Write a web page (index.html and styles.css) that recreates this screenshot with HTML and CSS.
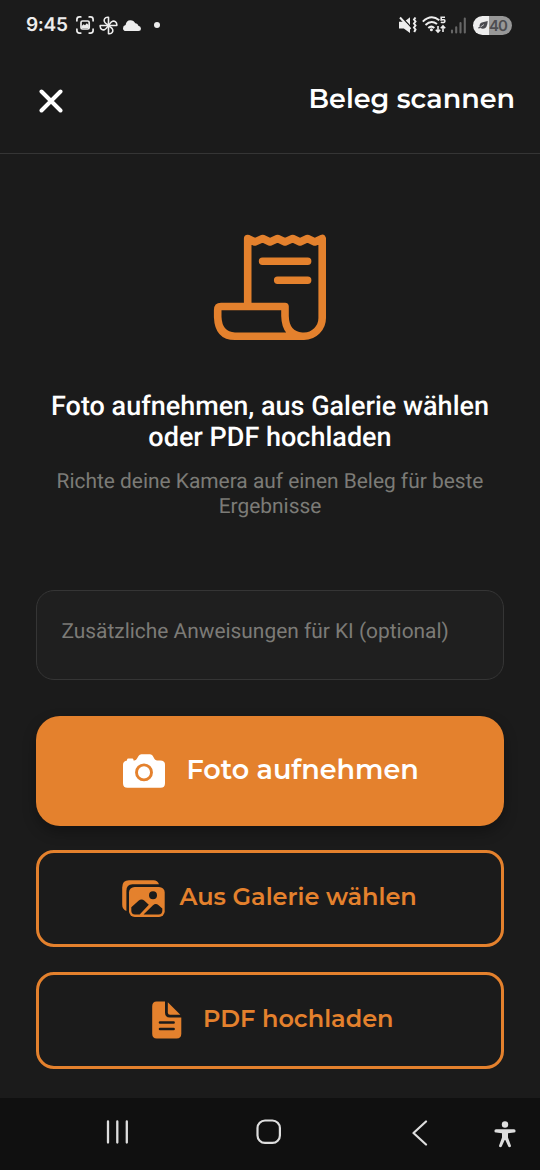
FILE: index.html
```html
<!DOCTYPE html>
<html lang="de">
<head>
<meta charset="utf-8">
<title>Beleg scannen</title>
<link rel="stylesheet" href="styles.css">
</head>
<body>
<div class="screen">
  <div class="status">
    <div class="status-left">
      <span class="time">9:45</span>
      <svg class="ic-capture" width="18" height="18" viewBox="0 0 18 18" fill="none" stroke="#ededed" stroke-width="1.7" stroke-linecap="round"><path d="M.9 4.8V3.5Q.9.9 3.5.9H4.8M13.2.9h1.3q2.6 0 2.6 2.6v1.3M17.1 13.2v1.3q0 2.6-2.6 2.6h-1.3M4.8 17.1H3.5q-2.6 0-2.6-2.6v-1.3"/><rect x="5" y="5" width="8.2" height="8" rx="1.5"/><path d="M5.5 12V10.200l2-1.900 1.500 1 1.800-2 2 2V12z" fill="#ededed" stroke="none"/></svg>
      <svg class="ic-fan" width="19" height="19" viewBox="0 0 19 19" fill="none" stroke="#ededed" stroke-width="1.6" stroke-linejoin="round"><g id="blade"><path d="M9.500 9.500V1.200H8.500C5.800 1.300 4.800 3.600 5.300 5.400 5.800 7.300 8 8.200 9.500 9.500z"/></g><use href="#blade" transform="rotate(90 9.5 9.5)"/><use href="#blade" transform="rotate(180 9.5 9.5)"/><use href="#blade" transform="rotate(270 9.5 9.5)"/></svg>
      <svg class="ic-cloud" width="18" height="11" viewBox="0 0 18 11" fill="#ededed"><path d="M3 11Q0 11 0 8.200 0 5.500 2.600 5 3.300.3 7.400.2q3.500 0 4.800 3 2.500-.3 3.200 2.600Q18 6.200 18 8.800 18 11 15.500 11z"/></svg>
      <i class="dot"></i>
    </div>
    <div class="status-right">
      <svg width="18" height="18" viewBox="0 0 18 18" fill="#ededed"><path d="M0 5.700H4L11 9V17L4.800 12.500H0zM6.500 4.700 11 1.300V9z"/><path d="M2.300.6 12.500 12" fill="none" stroke="#1b1b1b" stroke-width="1.300"/><path d="m1 1.500 10.500 11.500M16.500 1.500 15 3.500l1.500 2-1.500 2 1.500 2-1.500 2 1.500 2-1.300 2.500" fill="none" stroke="#ededed" stroke-width="2"/></svg>
      <svg class="ic-wifi" width="24" height="18" viewBox="0 0 24 18" fill="none" stroke="#ededed" stroke-width="2"><path d="M.8 5.600Q9-2.200 17.300 4.200M3.500 9Q9 3.600 15 8M6.300 12q3-2.800 6 0"/><circle cx="9.400" cy="13.700" r="1.500" fill="#ededed" stroke="none"/><path d="M23 1.200h-3.800v2.700q3.800-.8 3.700 1.300-.2 2-4.100 1M16 10v6m-2.200-2.300L16 16l2.200-2.300M21 16v-6m-2.200 2.300L21 10l2.200 2.300" stroke-width="1.600"/></svg>
      <svg class="ic-signal" width="17" height="17" viewBox="0 0 17 17" stroke="#666" stroke-width="2.100" stroke-linecap="round"><path d="M2 13.500v2M6.200 10.200v5.300M10.500 6v9.500M14.800 1.500v14"/></svg>
      <div class="battery"><svg width="10" height="8" viewBox="0 0 10 8"><path d="M0 6.500 1.600 6Q1 2 4.800 1.200L9.700 0Q9.500 7.500 5 7.700 3.500 7.700 2.500 7L.5 7.500z" fill="#4a4a4f"/><path d="m2.500 6 3.500-2.500" stroke="#ddd" stroke-width=".8"/></svg><span>40</span></div>
    </div>
  </div>
  <header class="header">
    <svg class="close" width="24" height="24" viewBox="0 0 24 24" stroke="#fff" stroke-width="4" stroke-linecap="round"><path d="m2.500 2.500 19 19m0-19-19 19"/></svg>
    <h1 class="brand title">Beleg scannen</h1>
  </header>
  <main class="content">
    <svg class="receipt" width="116" height="108" viewBox="212 233 116 108" fill="none" stroke="#e4812d" stroke-width="7.600" stroke-linecap="round" stroke-linejoin="round"><path d="M247.700 304V238.500L254.800 242 262.700 238.500 270 242 277.600 238.500 285 242 292.700 238.500 300 242 307.500 238.500 314.800 242 322.200 238.500V318A18.200 18.200 0 0 1 304 336.200H235Q218.500 336.200 217.700 317V310Q217.700 306.500 221 306.500H285V316Q285.500 335 302 336.200"/><path d="M262.500 261.200H307.700M277.600 280.200H307.700" stroke-width="7.400"/></svg>
    <h2 class="headline">Foto aufnehmen, aus Galerie wählen oder PDF hochladen</h2>
    <p class="hint">Richte deine Kamera auf einen Beleg für beste Ergebnisse</p>
    <div class="field">Zusätzliche Anweisungen für KI (optional)</div>
    <button class="btn primary">
      <svg width="42" height="34" viewBox="0 0 42 34"><path d="M4 6.400V5.700Q4.200 4.600 5.300 4.600H9.200Q10.300 4.600 10.500 5.700V6.400H11.500Q13 6.400 13.700 5L15.700 1.700Q16.600.2 18.400.2H27Q28.800.2 29.700 1.700L31.500 5Q32.400 6.400 34 6.400H37.500Q42 6.400 42 10.800V29.200Q42 33.700 37.500 33.700H4.500Q0 33.700 0 29.200V10.800Q0 7 4 6.400z" fill="#fff"/><circle cx="21" cy="18.400" r="7.500" fill="none" stroke="#e4812d" stroke-width="2.900"/></svg>
      <span class="brand">Foto aufnehmen</span>
    </button>
    <button class="btn outline gallery">
      <svg width="43" height="37" viewBox="0 0 43 37"><path d="M4.400 31Q.2 29.200.2 24.700V7.500Q.2.300 7 .3H31.500Q35.500.3 37 4.300H10.500Q4.400 4.300 4.400 11z" fill="#e4812d"/><rect x="7" y="6.900" width="35.700" height="30" rx="5.700" fill="#e4812d"/><circle cx="31" cy="15.300" r="4" fill="#1b1b1b"/><path d="M9.300 27.300 16.500 20.800Q19.500 18.200 22.500 20.800L26.800 24.700 17.700 34.500H13Q9.300 34.500 9.300 30.800zM21.500 34.500 31 25.200Q33.800 22.800 36.600 25.200L40.300 28.500V30.800Q40.300 34.500 36.600 34.500z" fill="#1b1b1b"/></svg>
      <span class="brand">Aus Galerie wählen</span>
    </button>
    <button class="btn outline pdf">
      <svg width="30" height="38" viewBox="0 0 30 38"><path d="M4.700.5H13V11.500Q13 16.500 18 16.500H29.300V32.700Q29.300 37.400 24.600 37.400H4.700Q.2 37.400.2 32.700V5.200Q.2.500 4.700.5z" fill="#e4812d"/><path d="M15.800 1.200 28.300 13.700H18Q15.800 13.700 15.800 11.500z" fill="#e4812d"/><path d="M8 21.500H21.600M8 28H21.600" stroke="#1b1b1b" stroke-width="2.600" stroke-linecap="round"/></svg>
      <span class="brand">PDF hochladen</span>
    </button>
  </main>
  <nav class="nav">
    <svg class="recents" width="23" height="25" viewBox="0 0 23 25" stroke="#dedede" stroke-width="2.300" stroke-linecap="round"><path d="M2 1.500v21M11.300 1.500v21M20.800 1.500v21"/></svg>
    <svg class="home" width="26" height="26" viewBox="0 0 26 26" fill="none" stroke="#dedede" stroke-width="2.200"><rect x="1.500" y="1.500" width="22.400" height="22.400" rx="7.500"/></svg>
    <svg class="back" width="16" height="26" viewBox="0 0 16 26" fill="none" stroke="#dedede" stroke-width="2.200" stroke-linecap="round" stroke-linejoin="round"><path d="M14 1.500 1.500 13 14 24.500"/></svg>
    <svg class="person" width="22" height="27" viewBox="0 0 22 27" fill="#dedede"><circle cx="11" cy="3.500" r="3.200"/><path d="M2 8.300H20a1.500 1.500 0 0 1 0 3.200L14 12.300V16.500L16.900 24.400A1.400 1.400 0 0 1 14.300 25.400L11.300 19H10.700L7.700 25.400A1.400 1.400 0 0 1 5.100 24.400L8 16.500V12.300L2 11.500a1.500 1.500 0 0 1 0-3.200z"/></svg>
  </nav>
</div>
</body>
</html>
```
FILE: styles.css
```css
* { box-sizing: border-box; }
body { margin: 0; background: #1b1b1b; font-family: Roboto, sans-serif; text-rendering: geometricPrecision; }
svg { display: block; flex: none; }
.screen { width: 540px; height: 1170px; display: flex; flex-direction: column; background: #1b1b1b; overflow: hidden; }
.status { height: 50px; display: flex; justify-content: space-between; padding: 0 28px 0 26px; }
.status-left, .status-right { display: flex; align-items: center; }
.time { width: 50px; color: #ededed; font: 600 19px/50px Inter, sans-serif; letter-spacing: -.3px; }
.ic-fan { margin-left: 5px; }
.ic-cloud { margin-left: 5px; }
.dot { width: 6px; height: 6px; border-radius: 50%; background: #ededed; margin-left: 13px; }
.ic-wifi { margin-left: 5px; }
.ic-signal { margin-left: 4px; }
.battery { width: 39px; height: 19px; margin-left: 6px; border-radius: 10px; background: linear-gradient(90deg, #ededed 0 16px, #989898 16px); display: flex; align-items: center; padding-left: 5px; color: #4d4d50; font: 600 15px/19px Inter, sans-serif; }
.battery span { margin-left: 1px; letter-spacing: -1px; }
.header { height: 104px; border-bottom: 1px solid #353535; display: flex; justify-content: space-between; align-items: center; padding: 0 25px 4px 39px; }
.close { margin-top: 3px; }
.brand { font-family: Montserrat, Inter, sans-serif; font-weight: 600; white-space: nowrap; }
.title { margin: -1px 0 0; font-size: 27px; line-height: 34px; color: #fff; }
.content { height: 944px; padding: 79px 36px 0; display: flex; flex-direction: column; align-items: center; }
.headline { margin: 50px 0 0; width: 460px; text-align: center; color: #fff; font-weight: 500; font-size: 27px; line-height: 31px; }
.hint { margin: 17px 0 0; width: 440px; text-align: center; color: #7c7b77; font-size: 20.900px; line-height: 25px; }
.field { width: 468px; height: 90px; margin-top: 70px; flex: none; border: 1px solid #353535; border-radius: 18px; background: #1f1f1f; padding: 29px 24.500px; color: #7c7b77; font-size: 20.900px; line-height: 25px; }
.btn { width: 468px; flex: none; display: flex; align-items: center; border: 0; padding: 0; text-align: left; }
.primary { height: 110px; margin-top: 36px; padding: 0 0 0 87px; border-radius: 24px; background: #e4812d; color: #fff; font-size: 27px; box-shadow: 0 6px 14px rgba(0, 0, 0, .3); }
.primary .brand { margin: -4px 0 0 21.500px; }
.outline { height: 97px; border: 3px solid #e4812d; border-radius: 18px; background: #1b1b1b; color: #e4812d; font-size: 24px; }
.gallery { margin-top: 24px; padding-left: 83px; }
.gallery .brand { margin: -4px 0 0 14.500px; }
.pdf { margin-top: 25px; padding: 0 0 2px 113px; }
.pdf .brand { margin: -3px 0 0 21px; }
.nav { height: 72px; background: #101010; display: flex; align-items: flex-start; padding: 22px 0 0 106px; }
.recents { margin-left: -.500px; }
.home { margin: -1px 0 0 127px; }
.back { margin-left: 130.500px; }
.person { margin: 1px 0 0 66px; }
```
